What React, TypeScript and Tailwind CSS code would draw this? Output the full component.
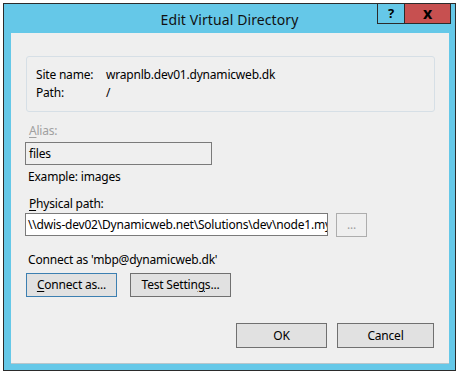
import React from "react";

const font = { fontFamily: '"Noto Sans", "Open Sans", sans-serif' };

function U({ children }: { children: React.ReactNode }) {
  return <span className="underline underline-offset-2">{children}</span>;
}

function Btn({
  children,
  w,
  h,
  blue,
}: {
  children: React.ReactNode;
  w: string;
  h: string;
  blue?: boolean;
}) {
  return (
    <div
      className={`${w} ${h} flex items-center justify-center bg-[#e1e1e1] border text-[12px] text-black ${
        blue ? "border-[#3c7fb1]" : "border-[#707070]"
      }`}
    >
      {children}
    </div>
  );
}

export default function App() {
  return (
    <div
      className="relative w-[460px] h-[376px] overflow-hidden bg-white"
      style={font}
    >
      {/* background application clutter */}
      <div className="flex text-[12px] leading-[14px] text-[#5a3a3a] -mt-[11px] pl-[60px]">
        <span className="w-[60px]">NET</span>
        <span className="w-[90px]">NET F</span>
        <span className="w-[57px]">NET</span>
        <span className="w-[78px]">NET B... Cl</span>
        <span className="w-[75px]">NET B</span>
        <span>NET</span>
      </div>

      {/* window */}
      <div className="absolute left-[3px] top-[3px] w-[453px] h-[368px] border border-[#2b2b2b] bg-[#65c8e8] flex flex-col">
        <div className="relative h-[29px] flex items-center justify-center">
          <span className="text-[14px] text-[#111] pt-[1px] tracking-[0.1px]">Edit Virtual Directory</span>
          <div className="absolute -top-[1px] right-[4px] flex h-[21px] border border-[#2b2b2b]">
            <div className="w-[27px] flex items-center justify-center border-r border-[#2b2b2b] text-[13px] font-bold text-black">
              ?
            </div>
            <div className="w-[45px] flex items-center justify-center bg-[#c75050] text-[16px] leading-none font-bold text-black pb-[2px]">
              x
            </div>
          </div>
        </div>

        {/* client */}
        <div className="ml-[7px] mr-[6px] h-[331px] bg-[#efefef] border-b border-[#b8c6cc] flex flex-col text-[12px] tracking-[-0.2px] text-black leading-[16px]">
          <div className="mt-[23px] ml-[15px] mr-[14px] h-[56px] border border-[#d6dfe6] rounded-[3px] pt-[9px] pl-[9px]">
            <div className="flex h-[18px] items-center">
              <span className="w-[70px]">Site name:</span>
              <span>wrapnlb.dev01.dynamicweb.dk</span>
            </div>
            <div className="flex h-[18px] items-center">
              <span className="w-[70px]">Path:</span>
              <span>/</span>
            </div>
          </div>

          <div className="mt-[11px] pl-[18px] text-[#a0a0a0]">
            <U>A</U>lias:
          </div>
          <div className="mt-[3px] ml-[14px] w-[187px] h-[23px] border border-[#7a7a7a] flex items-center pl-[3px]">
            files
          </div>
          <div className="mt-[4px] pl-[17px]">Example: images</div>

          <div className="mt-[11px] pl-[18px]">
            <U>P</U>hysical path:
          </div>
          <div className="mt-[1px] ml-[14px] flex items-start gap-[8px]">
            <div className="w-[303px] h-[23px] border border-[#7a7a7a] bg-white flex items-center pl-[2px] overflow-hidden">
              <span className="whitespace-nowrap">\\dwis-dev02\Dynamicweb.net\Solutions\dev\node1.my</span>
            </div>
            <div className="w-[31px] h-[24px] border border-[#adadad] bg-[#efefef] flex items-center justify-center text-[#a0a0a0]">
              ...
            </div>
          </div>

          <div className="mt-[15px] pl-[17px]">Connect as 'mbp@dynamicweb.dk'</div>
          <div className="mt-[5px] ml-[15px] flex gap-[13px]">
            <Btn w="w-[91px]" h="h-[24px]" blue>
              <span>
                <U>C</U>onnect as...
              </span>
            </Btn>
            <Btn w="w-[101px]" h="h-[24px]">
              <span>
                Test Settin<U>g</U>s...
              </span>
            </Btn>
          </div>

          <div className="mt-[26px] mr-[15px] flex justify-end gap-[10px]">
            <Btn w="w-[91px]" h="h-[25px]">OK</Btn>
            <Btn w="w-[97px]" h="h-[25px]">Cancel</Btn>
          </div>
        </div>
      </div>
    </div>
  );
}
